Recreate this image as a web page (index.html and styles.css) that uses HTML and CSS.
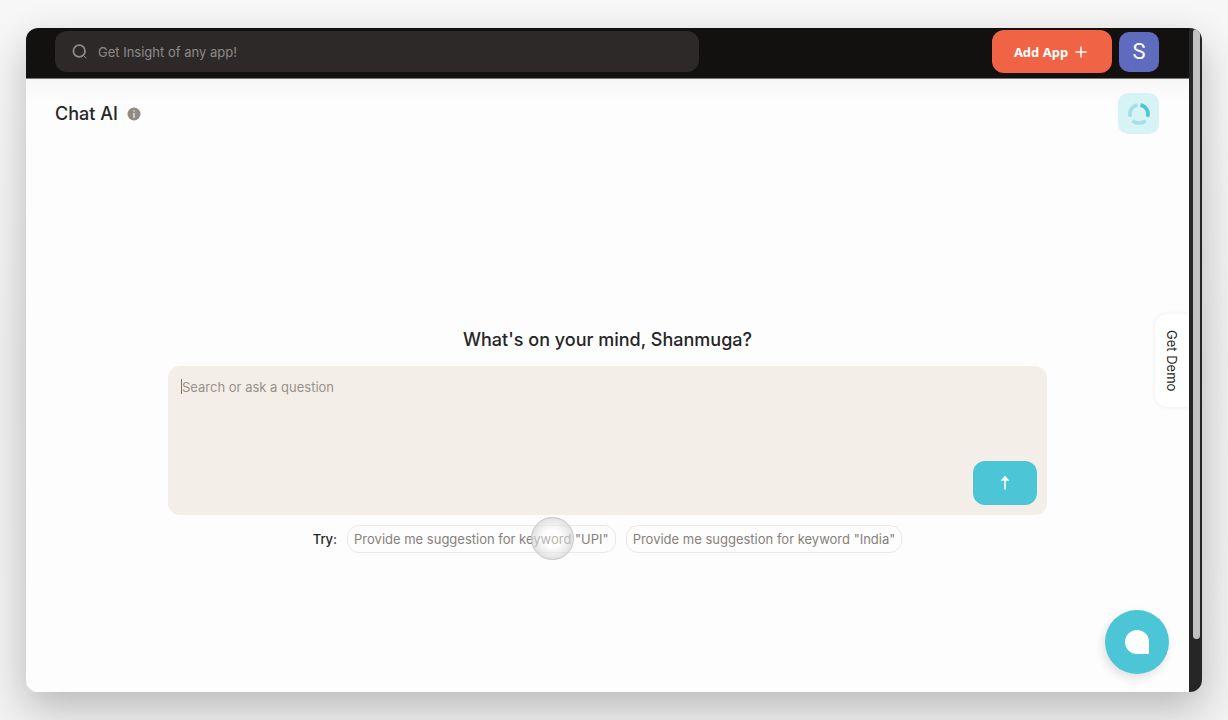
FILE: index.html
```html
<!DOCTYPE html>
<html lang="en">

<head>
    <meta charset="UTF-8">
    <meta name="viewport" content="width=device-width, initial-scale=1.0">
    <title>Chat AI</title>
    <link rel="stylesheet" href="styles.css">
</head>

<body>
    <div class="window">
        <div class="page">
            <header class="topbar">
                <label class="search">
                    <svg width="16" height="16" viewBox="0 0 16 16" fill="none" stroke="#8d8a88" aria-hidden="true">
                        <circle cx="7.2" cy="7" r="5.8" stroke-width="1.8" />
                        <path d="M11.8 11.8l2.2 2.4" stroke-width="1" stroke-linecap="round" />
                    </svg>
                    <input type="text" placeholder="Get Insight of any app!" aria-label="Search apps">
                </label>
                <div class="actions">
                    <button class="add-app">
                        Add App
                        <svg width="12" height="12" viewBox="0 0 12 12" stroke="#fff" stroke-width="1.5" stroke-linecap="round" aria-hidden="true">
                            <path d="M6 1v10M1 6h10" />
                        </svg>
                    </button>
                    <button class="avatar">S</button>
                </div>
            </header>

            <div class="heading">
                <h1>Chat AI</h1>
                <svg width="14" height="14" viewBox="0 0 14 14" aria-hidden="true">
                    <circle cx="7" cy="7" r="6.5" fill="#918b83" />
                    <path d="M7 3.2v1.4M7 6v4.8" stroke="#d8d4cf" stroke-width="1.8" />
                </svg>
                <button class="usage" aria-label="Usage">
                    <svg width="24" height="24" viewBox="0 0 24 24" fill="none" stroke-width="3.6" aria-hidden="true">
                        <path d="M13.5 3.1A9 9 0 0 1 20.6 14.8" stroke="#4cc5d6" />
                        <path d="M18.4 18.4A9 9 0 0 1 5.6 18.4" stroke="#a3e0e8" />
                        <path d="M3.4 14.8A9 9 0 0 1 10.5 3.1" stroke="#a3e0e8" />
                    </svg>
                </button>
            </div>

            <main class="chat">
                <h2>What's on your mind, Shanmuga?</h2>
                <form class="composer">
                    <textarea placeholder="Search or ask a question" aria-label="Question"></textarea>
                    <span class="caret"></span>
                    <button class="send" type="button" aria-label="Send">
                        <svg width="16" height="16" viewBox="0 0 16 16" aria-hidden="true">
                            <path d="M8 4v10.5" stroke="#fff" stroke-width="1.6" />
                            <path d="M8 0.8L12.4 5.8H3.6z" fill="#fff" />
                        </svg>
                    </button>
                </form>
                <div class="suggestions">
                    <span class="try">Try:</span>
                    <button class="chip">Provide me suggestion for keyword "UPI"<span class="pointer"></span></button>
                    <button class="chip">Provide me suggestion for keyword "India"</button>
                </div>
            </main>

            <button class="demo">Get Demo</button>
            <button class="chat-bubble" aria-label="Open support chat">
                <svg width="24" height="24" viewBox="0 0 24 24" aria-hidden="true">
                    <path d="M12 0A12 12 0 0 1 24 12V23Q24 24 23 24H12A12 12 0 0 1 12 0z" fill="#fff" />
                </svg>
            </button>
        </div>
        <div class="scrollbar">
            <div class="thumb"></div>
        </div>
    </div>
</body>

</html>
```
FILE: styles.css
```css
/* Reset and base styling */
* {
    margin: 0;
    padding: 0;
    box-sizing: border-box;
}

body {
    font-family: Inter, "Liberation Sans", sans-serif;
    background: linear-gradient(to bottom, #f7f7f7, #f0f0f0 50%, #f2f2f2);
    min-height: 100vh;
    padding: 28px 26px;
    display: flex;
    overflow: hidden;
    color: #262626;
}

button,
input,
textarea {
    font: inherit;
    border: none;
    outline: none;
}

button {
    cursor: pointer;
}

svg {
    flex-shrink: 0;
}

/* Window */
.window {
    flex: 1;
    display: flex;
    border-radius: 12px;
    overflow: hidden;
    box-shadow: 0 16px 40px rgba(0, 0, 0, 0.24);
}

.page {
    flex: 1;
    min-width: 0;
    position: relative;
    display: flex;
    flex-direction: column;
    background: #fdfdfd;
}

.scrollbar {
    width: 13px;
    padding: 1px 2px 0 4px;
    background: #262626;
}

.thumb {
    height: 92%;
    border-radius: 4px;
    background: #c1c1c1;
}

/* Top bar */
.topbar {
    display: flex;
    justify-content: space-between;
    align-items: center;
    gap: 24px;
    padding: 2px 30px 5px 29px;
    background: #12110f;
    border-bottom: 1px solid #777;
}

.search {
    flex: 1;
    max-width: 644px;
    height: 41px;
    display: flex;
    align-items: center;
    gap: 10px;
    padding: 0 17px;
    border-radius: 12px;
    background: #2d2928;
}

.search input {
    flex: 1;
    min-width: 0;
    background: none;
    font-size: 13px;
    color: #fff;
}

.search input::placeholder {
    color: #8d8a88;
}

.actions {
    display: flex;
    align-items: center;
    gap: 7px;
}

.add-app {
    display: flex;
    align-items: center;
    justify-content: center;
    gap: 7px;
    width: 120px;
    height: 43px;
    padding-right: 3px;
    border-radius: 12px;
    background: #f06445;
    color: #fff;
    font-family: "Noto Sans", "Open Sans", sans-serif;
    font-size: 13px;
    font-weight: 700;
}

.avatar {
    width: 40px;
    height: 40px;
    border-radius: 10px;
    background: #5f6bbf;
    color: #fff;
    font-family: Roboto, sans-serif;
    font-size: 22px;
}

/* Page heading */
.heading {
    display: flex;
    align-items: center;
    gap: 9px;
    padding: 14px 30px 8px 29px;
    background: linear-gradient(to bottom, #f7f7f7, #fdfdfd 24px);
}

.heading h1 {
    font-size: 18px;
    line-height: 21px;
    font-weight: 500;
}

.usage {
    display: flex;
    align-items: center;
    justify-content: center;
    width: 41px;
    height: 41px;
    margin-left: auto;
    border-radius: 10px;
    background: #d8f3f6;
}

/* Chat prompt */
.chat {
    flex: 1;
    display: flex;
    flex-direction: column;
    align-items: center;
    justify-content: center;
    padding: 48px 40px 0;
}

.chat h2 {
    margin-bottom: 16px;
    font-size: 18px;
    line-height: 21px;
    font-weight: 500;
}

.composer {
    position: relative;
    display: flex;
    align-items: flex-end;
    width: 100%;
    max-width: 879px;
    padding: 10px;
    border-radius: 12px;
    background: #f3eee7;
}

.composer textarea {
    flex: 1;
    height: 129px;
    padding: 3px 4px;
    background: none;
    resize: none;
    font-size: 13px;
    color: #262626;
}

.composer textarea::placeholder {
    color: #97928b;
}

.caret {
    position: absolute;
    top: 13px;
    left: 13px;
    width: 1px;
    height: 15px;
    background: #77736e;
}

.send {
    display: flex;
    align-items: center;
    justify-content: center;
    width: 64px;
    height: 44px;
    border-radius: 12px;
    background: #4cc5d6;
}

.suggestions {
    display: flex;
    align-items: center;
    gap: 10px;
    margin-top: 10px;
    font-size: 13px;
}

.try {
    font-weight: 500;
}

.chip {
    position: relative;
    height: 28px;
    padding: 0 6px;
    border: 1px solid #ebe9e6;
    border-radius: 12px;
    background: #fdfdfd;
    color: #85817b;
}

.pointer {
    position: absolute;
    top: -9px;
    right: 41px;
    width: 43px;
    height: 43px;
    border: 1px solid #c4c4c4;
    border-radius: 50%;
    background: radial-gradient(circle, rgba(255, 255, 255, 0.4) 30%, rgba(215, 215, 215, 0.7) 70%);
}

/* Floating controls */
.demo {
    position: absolute;
    top: 286px;
    right: 0;
    height: 93px;
    width: 34px;
    border-radius: 12px 0 0 12px;
    background: #fff;
    box-shadow: 0 0 4px rgba(0, 0, 0, 0.08);
    writing-mode: vertical-rl;
    font-size: 13px;
    color: #262626;
}

.chat-bubble {
    position: absolute;
    right: 20px;
    bottom: 18px;
    display: flex;
    align-items: center;
    justify-content: center;
    width: 64px;
    height: 64px;
    border-radius: 50%;
    background: #4cc5d6;
    box-shadow: -2px 4px 10px rgba(0, 0, 0, 0.12);
}
```
